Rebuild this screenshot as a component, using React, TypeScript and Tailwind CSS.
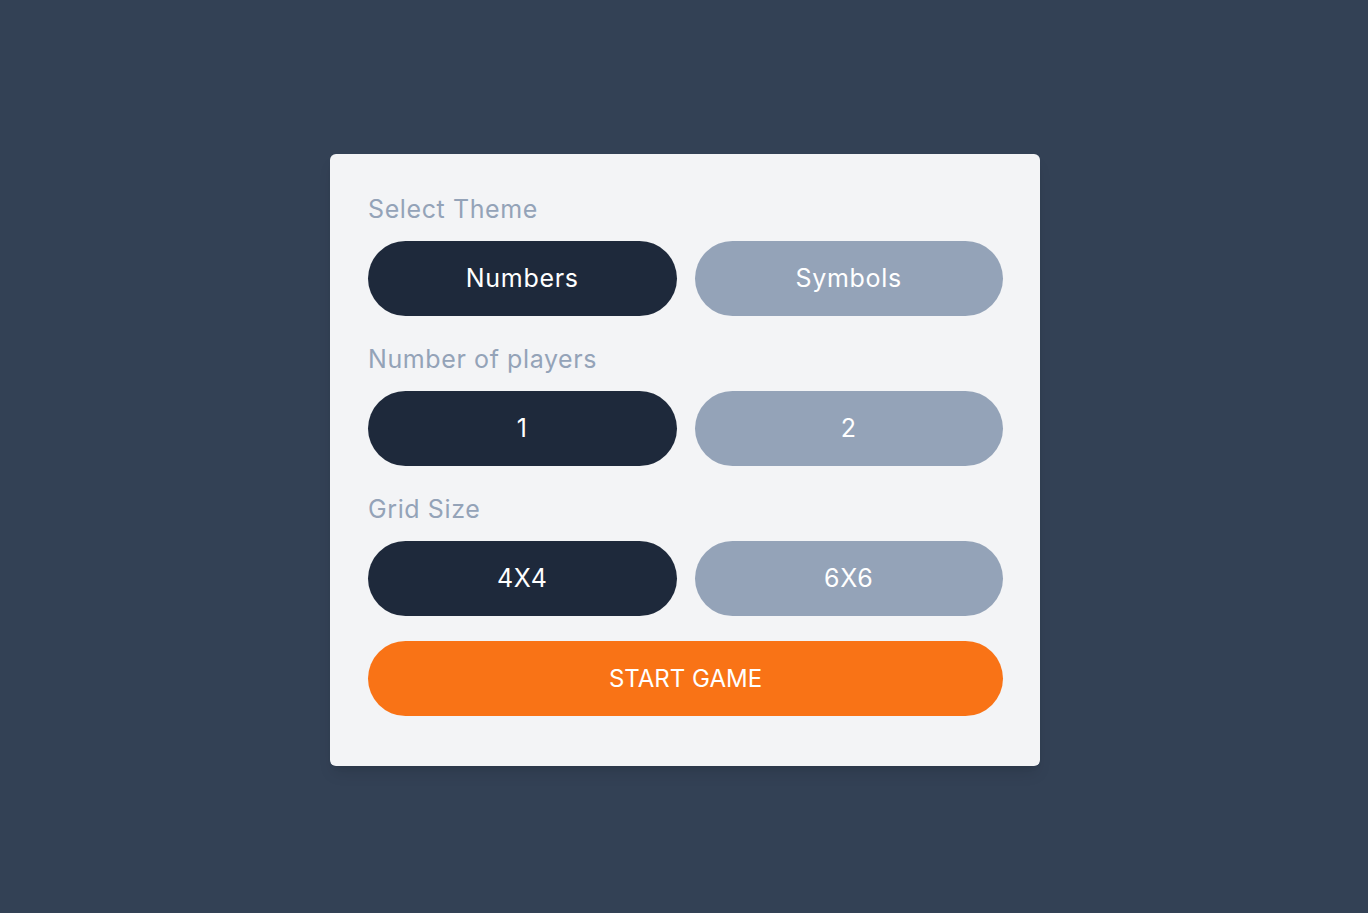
import React from "react";

function Btn({ label, active }: { label: string; active: boolean }) {
  return (
    <button
      className={
        "h-[75px] rounded-full text-[25px] tracking-[0.7px] text-white " +
        (active ? "bg-[#1e293b]" : "bg-[#94a3b8]")
      }
    >
      {label}
    </button>
  );
}

function Section({ title, a, b }: { title: string; a: string; b: string }) {
  return (
    <div className="flex flex-col">
      <div className="h-[32px] text-[25px] leading-[32px] tracking-[0.6px] text-[#94a3b8]">{title}</div>
      <div className="mt-[16px] grid grid-cols-2 gap-[18px]">
        <Btn label={a} active={true} />
        <Btn label={b} active={false} />
      </div>
    </div>
  );
}

export default function App() {
  return (
    <div
      className="flex min-h-screen items-start justify-center bg-[#334155] pt-[154px]"
      style={{ fontFamily: "Inter, 'Noto Sans', sans-serif" }}
    >
      <div className="ml-[2px] flex w-[710px] flex-col gap-[27px] rounded-md bg-[#f3f4f6] pb-[50px] pl-[38px] pr-[37px] pt-[39px] shadow-lg">
        <Section title="Select Theme" a="Numbers" b="Symbols" />
        <Section title="Number of players" a="1" b="2" />
        <div className="flex flex-col">
          <Section title="Grid Size" a="4X4" b="6X6" />
          <button className="mt-[25px] h-[75px] rounded-full bg-[#f97316] text-[24px] text-white">
            START GAME
          </button>
        </div>
      </div>
    </div>
  );
}
